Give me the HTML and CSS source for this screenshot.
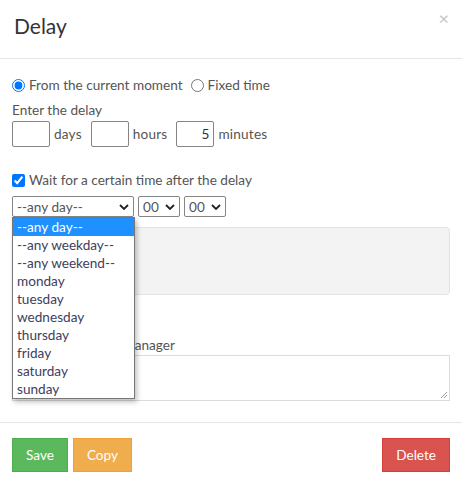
FILE: index.html
```html
<!DOCTYPE html>
<html>
<head>
<meta charset="utf-8">
<link rel="stylesheet" href="styles.css">
</head>
<body>
<div class="modal">
  <div class="modal-header">
    <h4 class="title">Delay</h4>
    <span class="close">&times;</span>
  </div>
  <div class="modal-body">
    <div class="radios">
      <label class="radio"><input type="radio" name="m" checked> From the current moment</label>
      <label class="radio"><input type="radio" name="m"> Fixed time</label>
    </div>
    <div class="label">Enter the delay</div>
    <div class="delay-row">
      <span class="num"></span><span class="unit">days</span>
      <span class="num"></span><span class="unit">hours</span>
      <span class="num">5</span><span class="unit">minutes</span>
    </div>
    <label class="check"><input type="checkbox" checked> Wait for a certain time after the delay</label>
    <div class="selects">
      <div class="select-wrap">
        <span class="select wide">--any day--<svg class="chev" viewBox="0 0 10 6"><path d="M1 1l4 4 4-4" fill="none" stroke="#222" stroke-width="1.8"/></svg></span>
        <ul class="dropdown">
          <li class="sel">--any day--</li>
          <li>--any weekday--</li>
          <li>--any weekend--</li>
          <li>monday</li>
          <li>tuesday</li>
          <li>wednesday</li>
          <li>thursday</li>
          <li>friday</li>
          <li>saturday</li>
          <li>sunday</li>
        </ul>
      </div>
      <span class="select">00<svg class="chev" viewBox="0 0 10 6"><path d="M1 1l4 4 4-4" fill="none" stroke="#222" stroke-width="1.8"/></svg></span>
      <span class="select">00<svg class="chev" viewBox="0 0 10 6"><path d="M1 1l4 4 4-4" fill="none" stroke="#222" stroke-width="1.8"/></svg></span>
    </div>
    <div class="grey-box"></div>
    <div class="spacer"></div>
    <div class="label comment"><span class="hidden-part">Comment for the </span>manager</div>
    <div class="textarea"><svg class="grip" viewBox="0 0 8 8"><path d="M7 1L1 7M7 4L4 7" stroke="#999" stroke-width="1"/></svg></div>
  </div>
  <div class="modal-footer">
    <span class="btn save">Save</span>
    <span class="btn copy">Copy</span>
    <span class="grow"></span>
    <span class="btn del">Delete</span>
  </div>
</div>
</body>
</html>
```

FILE: styles.css
```css
* { box-sizing: border-box; }
html, body { margin: 0; padding: 0; background: #fff; }
body {
  font-family: Lato, "Noto Sans", sans-serif;
  font-size: 13.6px;
  color: #555;
}
.modal { width: 462px; }
.modal-header {
  position: relative;
  height: 59px;
  border-bottom: 1px solid #e5e5e5;
  padding: 13px 14px 0;
}
.title {
  margin: 0;
  font-size: 21px;
  font-weight: normal;
  color: #333;
  line-height: 26px;
}
.close {
  position: absolute;
  right: 13px;
  top: 8px;
  font-size: 18px;
  color: #c4c4c4;
  line-height: 20px;
}
.modal-body {
  padding: 16px 12px 0;
  height: 363px;
}
.radios { display: flex; gap: 8px; height: 20px; align-items: center; }
.radio, .check { display: flex; align-items: center; }
.radio input, .check input { margin: 0 4px 0 0; width: 13px; height: 13px; }
.label { margin-top: 6px; line-height: 18px; }
.delay-row { display: flex; align-items: center; height: 26px; margin-top: 2px; }
.num {
  width: 38px; height: 26px;
  border: 1px solid #858585;
  border-radius: 2px;
  text-align: right;
  padding-right: 4px;
  line-height: 24px;
  color: #333;
}
.unit { margin: 0 9px 0 4px; letter-spacing: 0.2px; }
.check { margin-top: 23px; height: 20px; }
.selects { display: flex; gap: 4px; margin-top: 6px; }
.select-wrap { position: relative; }
.select {
  display: flex; align-items: center; justify-content: space-between;
  height: 21px;
  border: 1px solid #858585;
  border-radius: 2px;
  padding: 0 4px 0 4px;
  color: #555;
  width: 42px;
}
.select.wide { width: 122px; }
.chev { width: 10px; height: 6px; }
.dropdown {
  position: absolute;
  top: 21px; left: 0;
  width: 123px;
  margin: 0; padding: 0;
  list-style: none;
  background: #fff;
  border: 1px solid #767676;
  box-shadow: 2px 3px 5px rgba(0,0,0,0.25);
  z-index: 5;
}
.dropdown li { height: 18px; line-height: 18px; padding-left: 4px; color: #404060; }
.dropdown li.sel { background: #1e90ff; color: #fff; }
.grey-box {
  margin-top: 10px;
  height: 68px;
  background: #f3f3f3;
  border: 1px solid #e3e3e3;
  border-radius: 4px;
}
.spacer { height: 35px; }
.hidden-part { visibility: hidden; margin-right: 6px; }
.textarea {
  position: relative;
  height: 46px;
  border: 1px solid #dcdcdc;
  margin-top: 1px;
}
.grip { position: absolute; right: 1px; bottom: 1px; width: 8px; height: 8px; }
.modal-footer {
  border-top: 1px solid #e5e5e5;
  display: flex;
  padding: 15px 12px 0;
  gap: 5px;
}
.grow { flex: 1; }
.btn {
  height: 34px; line-height: 32px;
  padding: 0 13px;
  color: #fff;
  border: 1px solid;
}
.save { background: #5cb85c; border-color: #4cae4c; }
.copy { background: #f0ad4e; border-color: #eea236; }
.del { background: #d9534f; border-color: #d43f3a; }
```
